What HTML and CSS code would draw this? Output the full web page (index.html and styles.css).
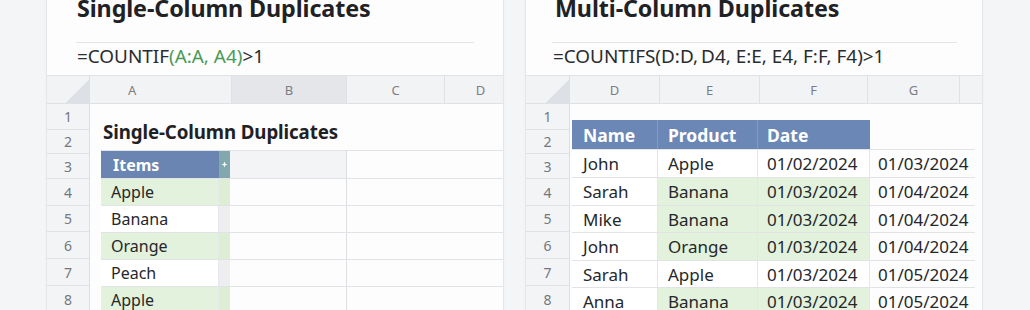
FILE: index.html
```html
<!DOCTYPE html>
<html lang="en">
<head>
<meta charset="utf-8">
<title>Duplicates</title>
<link rel="stylesheet" href="styles.css">
</head>
<body>
<div class="page">
  <section class="panel panel-left">
    <div class="head">
      <h1 class="title">Single-Column Duplicates</h1>
      <div class="rule"></div>
      <div class="formula">=COUNTIF<span class="g">(A:A, A4)</span>&gt;1</div>
    </div>
    <div class="sheet">
      <div class="colhdr">
        <div class="corner"></div>
        <div class="ch l-a">A</div>
        <div class="ch sel l-b">B</div>
        <div class="ch l-c">C</div>
        <div class="ch l-d">D</div>
      </div>
      <div class="body">
        <div class="rownums">
          <div class="rn h26">1</div>
          <div class="rn h24">2</div>
          <div class="rn h25">3</div>
          <div class="rn h27">4</div>
          <div class="rn h26">5</div>
          <div class="rn h27">6</div>
          <div class="rn h27">7</div>
          <div class="rn h27">8</div>
        </div>
        <div class="content content-left">
          <div class="sheet-title">Single-Column Duplicates</div>
          <div class="lrow lhead">
            <div class="lc item">Items</div>
            <div class="lc tcol"><svg width="7" height="7" viewBox="0 0 7 7"><path d="M3.5 0.5 L4.3 2.7 L6.5 3.5 L4.3 4.3 L3.5 6.5 L2.7 4.3 L0.5 3.5 L2.7 2.7 Z" fill="#ffffff"/></svg></div>
            <div class="lc bcol"></div>
            <div class="lc ccol"></div>
          </div>
          <div class="lrow dup"><div class="lc item">Apple</div><div class="lc tcol"></div><div class="lc bcol"></div><div class="lc ccol"></div></div>
          <div class="lrow"><div class="lc item">Banana</div><div class="lc tcol"></div><div class="lc bcol"></div><div class="lc ccol"></div></div>
          <div class="lrow dup"><div class="lc item">Orange</div><div class="lc tcol"></div><div class="lc bcol"></div><div class="lc ccol"></div></div>
          <div class="lrow"><div class="lc item">Peach</div><div class="lc tcol"></div><div class="lc bcol"></div><div class="lc ccol"></div></div>
          <div class="lrow dup"><div class="lc item">Apple</div><div class="lc tcol"></div><div class="lc bcol"></div><div class="lc ccol"></div></div>
        </div>
      </div>
    </div>
  </section>

  <section class="panel panel-right">
    <div class="head">
      <h1 class="title">Multi-Column Duplicates</h1>
      <div class="rule"></div>
      <div class="formula">=COUNTIFS(D:D,&#8201;D4, E:E, E4, F:F, F4)&gt;1</div>
    </div>
    <div class="sheet">
      <div class="colhdr">
        <div class="corner corner-r"></div>
        <div class="ch r-d">D</div>
        <div class="ch r-e">E</div>
        <div class="ch r-f">F</div>
        <div class="ch r-g">G</div>
        <div class="ch r-h"></div>
      </div>
      <div class="body">
        <div class="rownums rownums-r">
          <div class="rn h26">1</div>
          <div class="rn h24">2</div>
          <div class="rn h25">3</div>
          <div class="rn h27">4</div>
          <div class="rn h26">5</div>
          <div class="rn h27">6</div>
          <div class="rn h27">7</div>
          <div class="rn h27">8</div>
        </div>
        <div class="content content-right">
          <div class="rspacer"></div>
          <div class="rrow rhead">
            <div class="rc name">Name</div>
            <div class="rc prod">Product</div>
            <div class="rc date">Date</div>
            <div class="rc gcol"></div>
          </div>
          <div class="rrow h28"><div class="rc name">John</div><div class="rc prod">Apple</div><div class="rc date">01/02/2024</div><div class="rc gcol">01/03/2024</div></div>
          <div class="rrow h28"><div class="rc name">Sarah</div><div class="rc prod dup">Banana</div><div class="rc date dup">01/03/2024</div><div class="rc gcol">01/04/2024</div></div>
          <div class="rrow h27"><div class="rc name">Mike</div><div class="rc prod dup">Banana</div><div class="rc date dup">01/03/2024</div><div class="rc gcol">01/04/2024</div></div>
          <div class="rrow h28"><div class="rc name">John</div><div class="rc prod dup">Orange</div><div class="rc date dup">01/03/2024</div><div class="rc gcol">01/04/2024</div></div>
          <div class="rrow h27"><div class="rc name">Sarah</div><div class="rc prod">Apple</div><div class="rc date">01/03/2024</div><div class="rc gcol">01/05/2024</div></div>
          <div class="rrow h27"><div class="rc name">Anna</div><div class="rc prod dup">Banana</div><div class="rc date dup">01/03/2024</div><div class="rc gcol">01/05/2024</div></div>
        </div>
      </div>
    </div>
  </section>
</div>
</body>
</html>
```

FILE: styles.css
```css
* { box-sizing: border-box; }
html, body {
  margin: 0;
  padding: 0;
  width: 1030px;
  height: 310px;
  overflow: hidden;
  background: #f4f5f6;
  font-family: "Noto Sans", "Open Sans", sans-serif;
  color: #222427;
}
.page {
  display: flex;
  gap: 21px;
  padding-left: 46px;
  margin-top: -20px;
}
.panel {
  width: 458px;
  height: 360px;
  background: #fdfdfd;
  border: 1px solid #e4e6e9;
  border-radius: 8px;
  overflow: hidden;
  padding-top: 12px;
  box-shadow: 0 1px 3px rgba(0,0,0,0.03);
}
.head { padding: 0 29px 0 29px; }
.panel-right .head { padding: 0 25px 0 26px; }
.title {
  margin: 0;
  font-size: 23.3px;
  line-height: 30px;
  font-weight: 700;
  color: #1f2125;
  padding-left: 1px;
  letter-spacing: -0.1px;
  white-space: nowrap;
}
.panel-right .title { padding-left: 3px; }
.rule {
  height: 1px;
  background: #e3e5e8;
  margin-top: 19px;
}
.formula {
  margin-top: 1px;
  font-size: 18.9px;
  line-height: 24px;
  color: #2a2c30;
  padding-left: 1px;
  white-space: nowrap;
}
.formula .g { color: #4a9a57; }
.sheet { margin-top: 7px; }
.colhdr {
  display: flex;
  height: 29px;
  background: #f2f3f5;
  border-top: 1px solid #e1e3e7;
  border-bottom: 1px solid #dfe1e5;
}
.corner {
  width: 43px;
  flex: none;
  border-right: 1px solid #dcdfe3;
  background: linear-gradient(to top left, #dde0e4 50%, transparent 51%) no-repeat right bottom / 23px 23px;
}
.corner-r { width: 44px; }
.ch {
  flex: none;
  display: flex;
  align-items: center;
  justify-content: center;
  font-size: 13px;
  color: #7b7e84;
  border-right: 1px solid #dfe1e5;
}
.ch.sel { background: #e4e6ea; }
.l-a { width: 142px; justify-content: flex-start; padding-left: 38px; }
.l-b { width: 115px; }
.l-c { width: 98px; }
.l-d { width: 72px; }
.r-d { width: 90px; }
.r-e { width: 100px; }
.r-f { width: 108px; }
.r-g { width: 92px; }
.r-h { width: 70px; }
.body { display: flex; }
.rownums {
  width: 43px;
  flex: none;
  display: flex;
  flex-direction: column;
  background: #f3f4f6;
  border-right: 1px solid #dcdfe3;
}
.rownums-r { width: 44px; }
.rn {
  display: flex;
  align-items: center;
  justify-content: center;
  font-size: 14px;
  color: #74777d;
  border-bottom: 1px solid #dfe1e5;
}
.h24 { height: 24px; }
.h25 { height: 25px; }
.h26 { height: 26px; }
.h27 { height: 27px; }
.h28 { height: 28px; }
.content { flex: 1; display: flex; flex-direction: column; }
.content-left { padding-left: 11px; }
.sheet-title {
  height: 46px;
  padding: 15px 0 0 2px;
  font-size: 18.7px;
  line-height: 26px;
  font-weight: 700;
  color: #1f2125;
  letter-spacing: -0.1px;
  white-space: nowrap;
}
.lrow {
  display: flex;
  height: 27px;
  border-bottom: 1px solid #e1e3e7;
}
.lrow.lhead { height: 29px; border-top: 1px solid #e1e3e7; }
.lc {
  flex: none;
  display: flex;
  align-items: center;
  font-size: 16px;
  color: #25272a;
}
.lc.item { width: 118px; padding-left: 10px; background: #ffffff; border-right: 1px solid #e6e8eb; }
.lc.tcol { width: 11px; background: #eceef0; justify-content: center; }
.lc.bcol { width: 117px; border-right: 1px solid #dcdfe3; }
.lc.ccol { flex: 1; }
.lhead .lc.item {
  background: #6a85b2;
  color: #ffffff;
  font-weight: 700;
  padding-left: 12px;
  border-right: none;
}
.lhead .lc.tcol { background: #80a8ad; }
.lhead .lc.bcol { background: #f3f4f5; }
.lrow.dup .lc.item { background: #e3f2dc; }
.lrow.dup .lc.tcol { background: #dcefd5; }
.content-right { padding-left: 2px; }
.rspacer { height: 16px; }
.rrow {
  display: flex;
  border-bottom: 1px solid #e1e3e7;
  width: 403px;
}
.rrow.rhead { height: 30px; }
.rc {
  flex: none;
  display: flex;
  align-items: center;
  font-size: 17px;
  color: #25272a;
  background: #ffffff;
  border-right: 1px solid #e4e6e9;
  white-space: nowrap;
}
.rc.name { width: 86px; padding-left: 11px; }
.rc.prod { width: 100px; padding-left: 10px; }
.rc.date { width: 112px; padding-left: 9px; }
.rc.gcol { width: 105px; padding-left: 8px; border-right: none; background: #fdfdfd; }
.rc.dup { background: #e3f2dc; }
.rhead .rc {
  background: #6b87b5;
  color: #ffffff;
  font-weight: 700;
  font-size: 17.5px;
  border-right: 1px solid #8399bf;
}
.rhead .rc.date { border-right: none; }
.rhead .rc.gcol { background: #fdfdfd; border-right: none; }
```
